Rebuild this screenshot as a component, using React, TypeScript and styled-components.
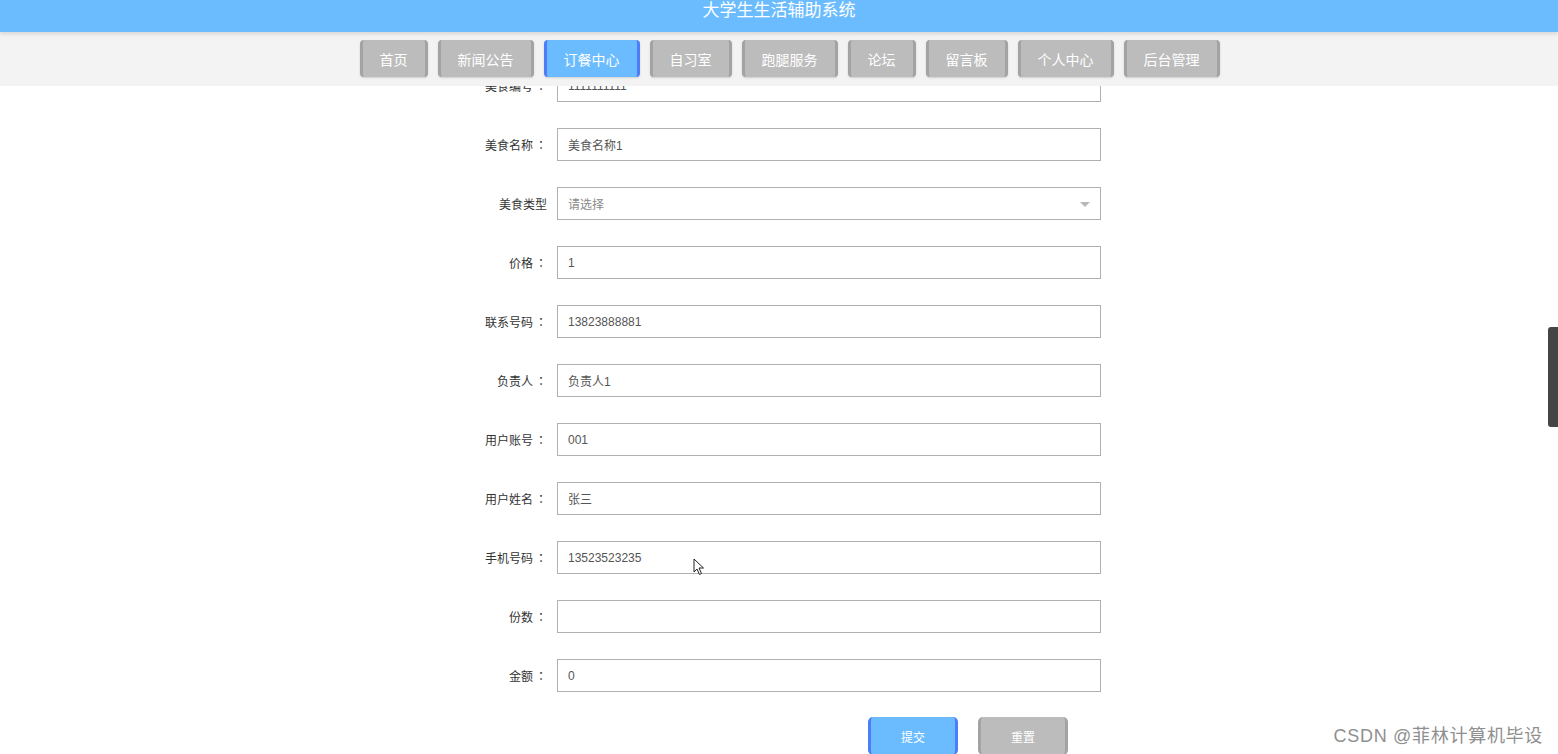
import React from 'react';
import styled, { createGlobalStyle } from 'styled-components';

const GlobalStyle = createGlobalStyle`
  html, body {
    margin: 0;
    padding: 0;
    background: #fff;
    font-family: "Liberation Sans", "Noto Sans CJK SC", sans-serif;
    overflow: hidden;
  }
`;

const Page = styled.div`
  position: relative;
  width: 1558px;
  height: 754px;
  overflow: hidden;
`;

const Header = styled.header`
  position: absolute;
  top: 0;
  left: 0;
  right: 0;
  z-index: 10;
`;

const TitleBar = styled.div`
  height: 32px;
  background: #6bbcff;
  color: #fff;
  font-size: 17px;
  line-height: 18px;
  padding-top: 2px;
  box-sizing: border-box;
  text-align: center;
  box-shadow: 0 2px 4px rgba(0, 0, 0, 0.12);
  position: relative;
  z-index: 1;
`;

const NavBar = styled.nav`
  height: 54px;
  background: #f4f3f4;
  display: flex;
  justify-content: center;
  align-items: flex-start;
  padding-top: 8px;
  padding-left: 21px;
  box-sizing: border-box;
  gap: 10px;
`;

const NavButton = styled.div<{ $active?: boolean }>`
  height: 37px;
  box-sizing: border-box;
  padding: 0 17px;
  display: flex;
  align-items: center;
  font-size: 14px;
  color: #fff;
  border-radius: 4px;
  background: ${(p) => (p.$active ? '#6bbcff' : '#bcbcbc')};
  border-left: 3px solid ${(p) => (p.$active ? '#4c7dfb' : '#a3a3a3')};
  border-right: 3px solid ${(p) => (p.$active ? '#4c7dfb' : '#a3a3a3')};
  box-shadow: 0 1px 2px rgba(0, 0, 0, 0.15);
`;

const Content = styled.main`
  padding-top: 69px;
  display: flex;
  justify-content: center;
`;

const Form = styled.form`
  width: 704px;
  display: flex;
  flex-direction: column;
  gap: 26px;
`;

const Row = styled.div`
  display: flex;
  align-items: center;
  gap: 10px;
`;

const Label = styled.label`
  width: 120px;
  text-align: right;
  font-size: 12px;
  color: #333;
`;

const Colon = styled.span`
  font-family: "Noto Sans CJK TC", sans-serif;
  margin-left: 2px;
`;

const Field = styled.div`
  position: relative;
  width: 544px;
  height: 33px;
  box-sizing: border-box;
  border: 1px solid #b0b0b0;
  background: #fff;
  padding-left: 10px;
  display: flex;
  align-items: center;
  font-size: 12px;
  color: #555;
`;

const Placeholder = styled.span`
  color: #8a8a8a;
`;

const Caret = styled.span`
  position: absolute;
  right: 10px;
  top: 14px;
  width: 0;
  height: 0;
  border-left: 5px solid transparent;
  border-right: 5px solid transparent;
  border-top: 5px solid #b8b8b8;
`;

const Actions = styled.div`
  display: flex;
  gap: 20px;
  padding-left: 441px;
  margin-top: -1px;
`;

const ActionButton = styled.button<{ $primary?: boolean }>`
  width: 90px;
  height: 38px;
  box-sizing: border-box;
  border: none;
  border-radius: 5px;
  font-size: 12px;
  font-family: inherit;
  color: #fff;
  background: ${(p) => (p.$primary ? '#6bbcff' : '#bcbcbc')};
  border-left: 3px solid ${(p) => (p.$primary ? '#4c7dfb' : '#a3a3a3')};
  border-right: 3px solid ${(p) => (p.$primary ? '#4c7dfb' : '#a3a3a3')};
`;

const Watermark = styled.div`
  position: absolute;
  right: 15px;
  bottom: 7px;
  font-size: 18px;
  color: #8f8f8f;
  letter-spacing: 0.7px;
`;

const ScrollThumb = styled.div`
  position: absolute;
  right: 0;
  top: 327px;
  width: 10px;
  height: 100px;
  background: #454545;
  border-radius: 3px 0 0 3px;
`;

const Cursor = styled.svg`
  position: absolute;
  left: 693px;
  top: 558px;
`;

const navItems = ['首页', '新闻公告', '订餐中心', '自习室', '跑腿服务', '论坛', '留言板', '个人中心', '后台管理'];

type FieldDef = { label: string; colon?: boolean; value?: string; placeholder?: string; select?: boolean };

const fields: FieldDef[] = [
  { label: '美食编号', colon: true, value: '1111111111' },
  { label: '美食名称', colon: true, value: '美食名称1' },
  { label: '美食类型', placeholder: '请选择', select: true },
  { label: '价格', colon: true, value: '1' },
  { label: '联系号码', colon: true, value: '13823888881' },
  { label: '负责人', colon: true, value: '负责人1' },
  { label: '用户账号', colon: true, value: '001' },
  { label: '用户姓名', colon: true, value: '张三' },
  { label: '手机号码', colon: true, value: '13523523235' },
  { label: '份数', colon: true, value: '' },
  { label: '金额', colon: true, value: '0' },
];

const App: React.FC = () => {
  return (
    <Page>
      <GlobalStyle />
      <Header>
        <TitleBar>大学生生活辅助系统</TitleBar>
        <NavBar>
          {navItems.map((n) => (
            <NavButton key={n} $active={n === '订餐中心'}>
              {n}
            </NavButton>
          ))}
        </NavBar>
      </Header>
      <Content>
        <Form>
          {fields.map((f) => (
            <Row key={f.label}>
              <Label>
                {f.label}
                {f.colon && <Colon>：</Colon>}
              </Label>
              <Field>
                {f.placeholder ? <Placeholder>{f.placeholder}</Placeholder> : f.value}
                {f.select && <Caret />}
              </Field>
            </Row>
          ))}
          <Actions>
            <ActionButton type="button" $primary>
              提交
            </ActionButton>
            <ActionButton type="button">重置</ActionButton>
          </Actions>
        </Form>
      </Content>
      <Cursor width="12" height="18" viewBox="0 0 12 18">
        <path d="M1 1 L1 14 L4 11 L6.5 16.5 L8.5 15.5 L6 10 L10.5 10 Z" fill="#fff" stroke="#222" strokeWidth="1" />
      </Cursor>
      <ScrollThumb />
      <Watermark>CSDN @菲林计算机毕设</Watermark>
    </Page>
  );
};

export default App;
